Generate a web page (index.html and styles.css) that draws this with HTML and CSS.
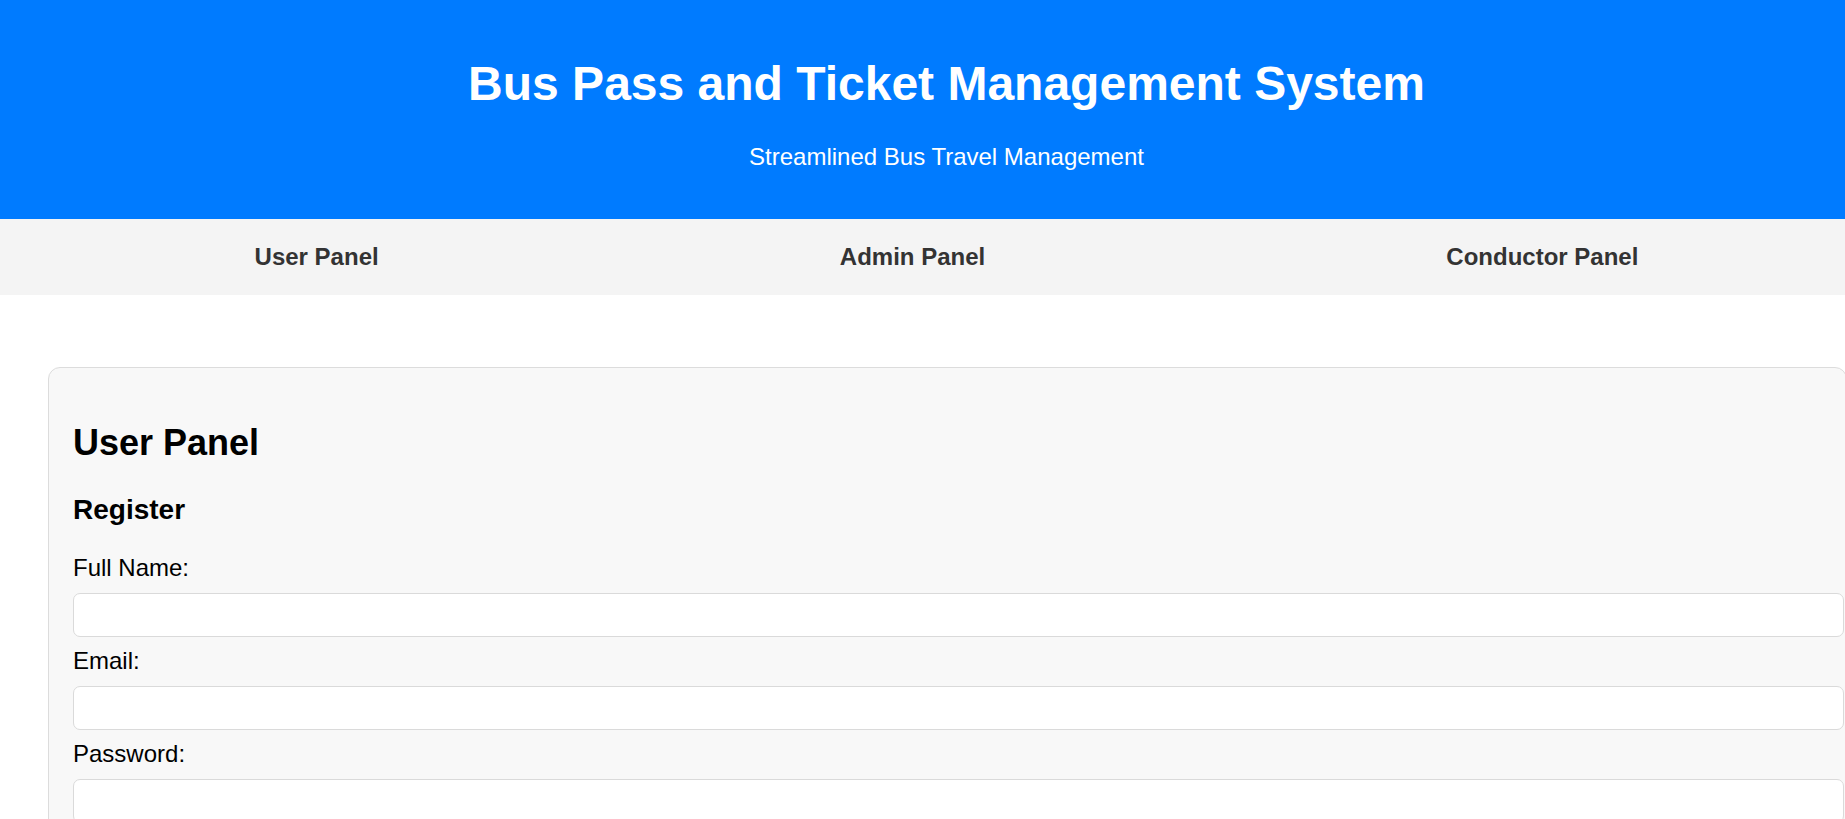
FILE: index.html
```html
<!DOCTYPE html>
<html lang="en">
<head>
<meta charset="utf-8">
<title>Bus Pass and Ticket Management System</title>
<link rel="stylesheet" href="styles.css">
</head>
<body>
<header class="site-header">
  <h1 class="site-title">Bus Pass and Ticket Management System</h1>
  <p class="site-tagline">Streamlined Bus Travel Management</p>
</header>
<nav class="site-nav">
  <a class="nav-link" href="#user">User Panel</a>
  <a class="nav-link" href="#admin">Admin Panel</a>
  <a class="nav-link" href="#conductor">Conductor Panel</a>
</nav>
<main class="main">
  <section class="panel" id="user">
    <h2 class="panel-title">User Panel</h2>
    <h3 class="panel-subtitle">Register</h3>
    <form class="form">
      <label class="form-label" for="fullname">Full Name:</label>
      <input class="form-input" type="text" id="fullname">
      <label class="form-label" for="email">Email:</label>
      <input class="form-input" type="email" id="email">
      <label class="form-label" for="password">Password:</label>
      <input class="form-input" type="password" id="password">
      <button class="form-button" type="button">Register</button>
    </form>
  </section>
</main>
</body>
</html>
```
FILE: styles.css
```css
html {
  scrollbar-width: none;
}
body {
  margin: 0;
  font-family: "Liberation Sans", Arial, sans-serif;
  color: #000;
  background: #fff;
  overflow-x: hidden;
}
.site-header {
  width: 100%;
  background: #007bff;
  color: #fff;
  text-align: center;
  padding: 24px;
}
.site-title {
  font-size: 48px;
  font-weight: bold;
  margin: 32px 0;
}
.site-tagline {
  font-size: 24px;
  margin: 24px 0;
}
.site-nav {
  display: flex;
  justify-content: space-around;
  width: 100%;
  padding: 24px;
  background: #f4f4f4;
}
.nav-link {
  color: #333;
  font-size: 24px;
  font-weight: bold;
  text-decoration: none;
}
.main {
  padding: 72px 48px 48px;
}
.panel {
  width: 100%;
  padding: 24px;
  background: #f8f8f8;
  border: 1px solid #dcdcdc;
  border-radius: 12px;
}
.panel-title {
  font-size: 36px;
  margin: 30px 0;
}
.panel-subtitle {
  font-size: 28px;
  margin: 28px 0;
}
.form-label {
  display: block;
  font-size: 24px;
}
.form-input {
  display: block;
  width: 100%;
  height: 24px;
  padding: 9px 10px;
  margin: 11px 0 10px;
  border: 1px solid #dadada;
  border-radius: 7px;
  background: #fff;
  font-size: 20px;
  font-family: "Liberation Sans", Arial, sans-serif;
}
.form-button {
  margin-top: 12px;
  padding: 12px 24px;
  font-size: 24px;
  color: #fff;
  background: #007bff;
  border: none;
  border-radius: 7px;
}
```
